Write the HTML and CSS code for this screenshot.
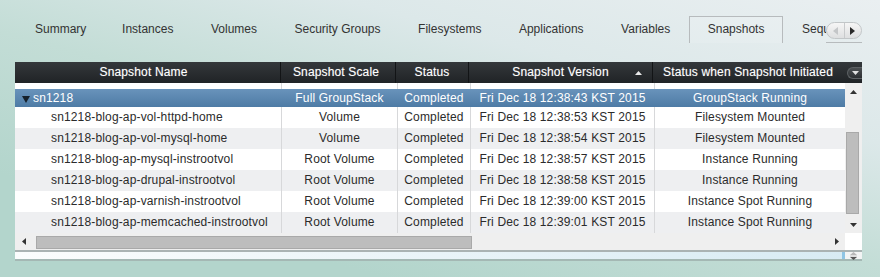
FILE: index.html
```html
<!DOCTYPE html>
<html lang="en">
<head>
  <meta charset="UTF-8">
  <title>Snapshots</title>
  <link rel="stylesheet" href="styles.css">
</head>
<body>
  <div class="tab-strip">
    <div class="tabs">
      <div class="tab">Summary</div>
      <div class="tab">Instances</div>
      <div class="tab">Volumes</div>
      <div class="tab">Security Groups</div>
      <div class="tab">Filesystems</div>
      <div class="tab">Applications</div>
      <div class="tab">Variables</div>
      <div class="tab active">Snapshots</div>
      <div class="tab">Sequences</div>
    </div>
    <div class="tab-scroll">
      <div class="ts-pill">
        <span class="ts-btn"><svg width="5" height="8" viewBox="0 0 5 8"><polygon points="5,0 5,8 0,4" fill="#c4c6c8"/></svg></span>
        <span class="ts-btn"><svg width="5" height="8" viewBox="0 0 5 8"><polygon points="0,0 0,8 5,4" fill="#2a2a2a"/></svg></span>
      </div>
    </div>
  </div>

  <div class="grid">
    <div class="grid-head">
      <div class="hd">Snapshot Name</div>
      <div class="hd">Snapshot Scale</div>
      <div class="hd">Status</div>
      <div class="hd sorted">Snapshot Version
        <svg class="sort-arrow" width="7" height="4" viewBox="0 0 7 4"><polygon points="3.5,0 7,4 0,4" fill="#e8e8e8"/></svg>
      </div>
      <div class="hd">Status when Snapshot Initiated</div>
      <div class="hd-menu">
        <span class="menu-btn"><svg width="7" height="4" viewBox="0 0 7 4"><polygon points="0,0 7,0 3.5,4" fill="#e0e0e0"/></svg></span>
      </div>
    </div>

    <div class="grid-main">
      <div class="grid-view">
        <div class="row partial">
          <div class="cell"></div>
          <div class="cell"></div>
          <div class="cell"></div>
          <div class="cell"></div>
          <div class="cell"></div>
        </div>
        <div class="row group">
          <div class="cell name"><svg class="caret" width="8" height="7" viewBox="0 0 8 7"><polygon points="0,0 8,0 4,7" fill="#15202b"/></svg>sn1218</div>
          <div class="cell">Full GroupStack</div>
          <div class="cell">Completed</div>
          <div class="cell">Fri Dec 18 12:38:43 KST 2015</div>
          <div class="cell">GroupStack Running</div>
        </div>
        <div class="row">
          <div class="cell name child">sn1218-blog-ap-vol-httpd-home</div>
          <div class="cell">Volume</div>
          <div class="cell">Completed</div>
          <div class="cell">Fri Dec 18 12:38:53 KST 2015</div>
          <div class="cell">Filesystem Mounted</div>
        </div>
        <div class="row alt">
          <div class="cell name child">sn1218-blog-ap-vol-mysql-home</div>
          <div class="cell">Volume</div>
          <div class="cell">Completed</div>
          <div class="cell">Fri Dec 18 12:38:54 KST 2015</div>
          <div class="cell">Filesystem Mounted</div>
        </div>
        <div class="row">
          <div class="cell name child">sn1218-blog-ap-mysql-instrootvol</div>
          <div class="cell">Root Volume</div>
          <div class="cell">Completed</div>
          <div class="cell">Fri Dec 18 12:38:57 KST 2015</div>
          <div class="cell">Instance Running</div>
        </div>
        <div class="row alt">
          <div class="cell name child">sn1218-blog-ap-drupal-instrootvol</div>
          <div class="cell">Root Volume</div>
          <div class="cell">Completed</div>
          <div class="cell">Fri Dec 18 12:38:58 KST 2015</div>
          <div class="cell">Instance Running</div>
        </div>
        <div class="row">
          <div class="cell name child">sn1218-blog-ap-varnish-instrootvol</div>
          <div class="cell">Root Volume</div>
          <div class="cell">Completed</div>
          <div class="cell">Fri Dec 18 12:39:00 KST 2015</div>
          <div class="cell">Instance Spot Running</div>
        </div>
        <div class="row alt">
          <div class="cell name child">sn1218-blog-ap-memcached-instrootvol</div>
          <div class="cell">Root Volume</div>
          <div class="cell">Completed</div>
          <div class="cell">Fri Dec 18 12:39:01 KST 2015</div>
          <div class="cell">Instance Spot Running</div>
        </div>
      </div>
      <div class="vscroll">
        <div class="sb-btn"><svg width="7" height="4" viewBox="0 0 7 4"><polygon points="3.5,0 7,4 0,4" fill="#333"/></svg></div>
        <div class="sb-track"><div class="vthumb"></div></div>
        <div class="sb-btn"><svg width="7" height="4" viewBox="0 0 7 4"><polygon points="0,0 7,0 3.5,4" fill="#333"/></svg></div>
      </div>
    </div>

    <div class="hscroll">
      <div class="sb-btn"><svg width="4" height="7" viewBox="0 0 4 7"><polygon points="4,0 4,7 0,3.5" fill="#333"/></svg></div>
      <div class="sb-track"><div class="hthumb"></div></div>
      <div class="sb-btn"><svg width="4" height="7" viewBox="0 0 4 7"><polygon points="0,0 0,7 4,3.5" fill="#333"/></svg></div>
      <div class="corner"></div>
    </div>

    <div class="grid-foot">
      <div class="foot-bar"></div>
      <div class="foot-mark"></div>
      <div class="foot-handle">
        <svg width="7" height="8" viewBox="0 0 7 8"><polygon points="3.5,0 7,3 0,3" fill="#b8b8b8"/><rect x="0" y="3.5" width="7" height="1" fill="#c8c8c8"/><polygon points="0,5 7,5 3.5,8" fill="#555"/></svg>
      </div>
    </div>
  </div>
</body>
</html>
```

FILE: styles.css
```css
body {
  margin: 0;
  width: 880px;
  height: 277px;
  box-sizing: border-box;
  padding: 16px 18px 0 15px;
  overflow: hidden;
  font: 12px "Liberation Sans", Arial, sans-serif;
  letter-spacing: 0.15px;
  color: #333;
  background: linear-gradient(195deg, #eaeff1 0%, #dce8e9 28%, #c3ddd6 52%, #b3d5cc 80%);
}

/* tabs */
.tab-strip {
  display: flex;
  height: 27px;
  letter-spacing: 0;
}
.tabs {
  flex: 1;
  display: flex;
  overflow: hidden;
  white-space: nowrap;
}
.tab {
  flex: none;
  height: 26px;
  line-height: 24px;
  padding: 0 17.75px;
  border: 1px solid transparent;
  border-bottom-color: #b7bbbd;
  color: #333;
}
.tab:first-child {
  padding: 0 16px 0 19px;
}
.tab.active {
  border-color: #b7bbbd;
  border-bottom-color: transparent;
  background: rgba(255, 255, 255, 0.12);
}
.tab-scroll {
  width: 36px;
  display: flex;
  align-items: flex-end;
  padding-bottom: 3px;
  box-sizing: border-box;
  border-bottom: 1px solid #b7bbbd;
}
.ts-pill {
  display: flex;
  width: 36px;
  height: 17px;
  box-sizing: border-box;
  border: 1px solid #c2c6c8;
  border-radius: 9px;
  background: linear-gradient(#f6f6f6, #dedfe0);
  overflow: hidden;
}
.ts-btn {
  flex: 1;
  display: flex;
  align-items: center;
  justify-content: center;
}
.ts-btn + .ts-btn {
  border-left: 1px solid #c8cacc;
}

/* grid */
.grid {
  margin-top: 19px;
  width: 847px;
}
.grid-head {
  display: flex;
  height: 21px;
  background: linear-gradient(#34383b, #202326);
  color: #fff;
}
.hd {
  position: relative;
  line-height: 21px;
  text-align: center;
  border-right: 1px solid #121416;
  text-shadow: 0 0 1px rgba(255, 255, 255, 0.4);
}
.hd:nth-child(1) { width: 266px; padding-right: 8px; box-sizing: border-box; }
.hd:nth-child(2) { width: 115px; padding-right: 4px; box-sizing: border-box; }
.hd:nth-child(3) { width: 72px; }
.hd:nth-child(4) { width: 183px; }
.hd:nth-child(5) { width: 190px; border-right: 0; }
.sort-arrow {
  position: absolute;
  right: 10px;
  top: 9px;
}
.hd-menu {
  flex: 1;
  display: flex;
  align-items: center;
  justify-content: flex-end;
}
.menu-btn {
  display: flex;
  align-items: center;
  justify-content: center;
  width: 15px;
  height: 12px;
  box-sizing: border-box;
  border: 1px solid #5d6164;
  border-right: 0;
  border-radius: 6px 0 0 6px;
  background: linear-gradient(#4a4e51, #2c2f32);
}

.grid-main {
  display: flex;
  height: 150px;
}
.grid-view {
  width: 830px;
  overflow: hidden;
  background: #fff;
}
.row {
  display: grid;
  grid-template-columns: 267px 116px 73px 184px 190px;
  height: 21px;
  line-height: 21px;
  background: #fff;
  color: #2b2b2b;
}
.row.alt {
  background: #eeeff1;
}
.row.partial {
  height: 6px;
}
.cell {
  text-align: center;
  white-space: nowrap;
  overflow: hidden;
  border-right: 1px solid #d7d8da;
}
.cell:last-child {
  border-right: 0;
}
.cell.name {
  text-align: left;
  padding-left: 7px;
}
.cell.child {
  padding-left: 36px;
}
.row.group {
  height: 18px;
  line-height: 18px;
  color: #fff;
  background: linear-gradient(#6993bb, #4e7ba5);
}
.row.group .cell {
  border-right-color: transparent;
}
.caret {
  margin: 0 3px 0 0;
  vertical-align: -1px;
}

/* scrollbars */
.vscroll {
  width: 17px;
  display: flex;
  flex-direction: column;
  background: #efefef;
}
.sb-btn {
  flex: none;
  width: 17px;
  height: 17px;
  display: flex;
  align-items: center;
  justify-content: center;
}
.sb-track {
  flex: 1;
}
.vthumb {
  margin: 32px 0 0 1px;
  width: 13px;
  height: 82px;
  box-sizing: border-box;
  background: #bdbdbd;
  border: 1px solid #a9a9a9;
}
.hscroll {
  display: flex;
  height: 17px;
  background: #efefef;
}
.hthumb {
  margin: 3px 0 0 4px;
  width: 436px;
  height: 13px;
  box-sizing: border-box;
  background: #bdbdbd;
  border: 1px solid #a9a9a9;
}
.corner {
  width: 17px;
  background: #fff;
}

.grid-foot {
  display: flex;
  height: 7px;
  border-top: 2px solid #aab3b3;
  border-bottom: 2px solid #a4b8b4;
  background: linear-gradient(to right, #fbfdfd, #d7ebf3);
}
.foot-bar {
  flex: 1;
}
.foot-mark {
  width: 3px;
  background: #8fc5e4;
}
.foot-handle {
  width: 17px;
  display: flex;
  align-items: center;
  justify-content: center;
  background: #f2f4f4;
}
```
